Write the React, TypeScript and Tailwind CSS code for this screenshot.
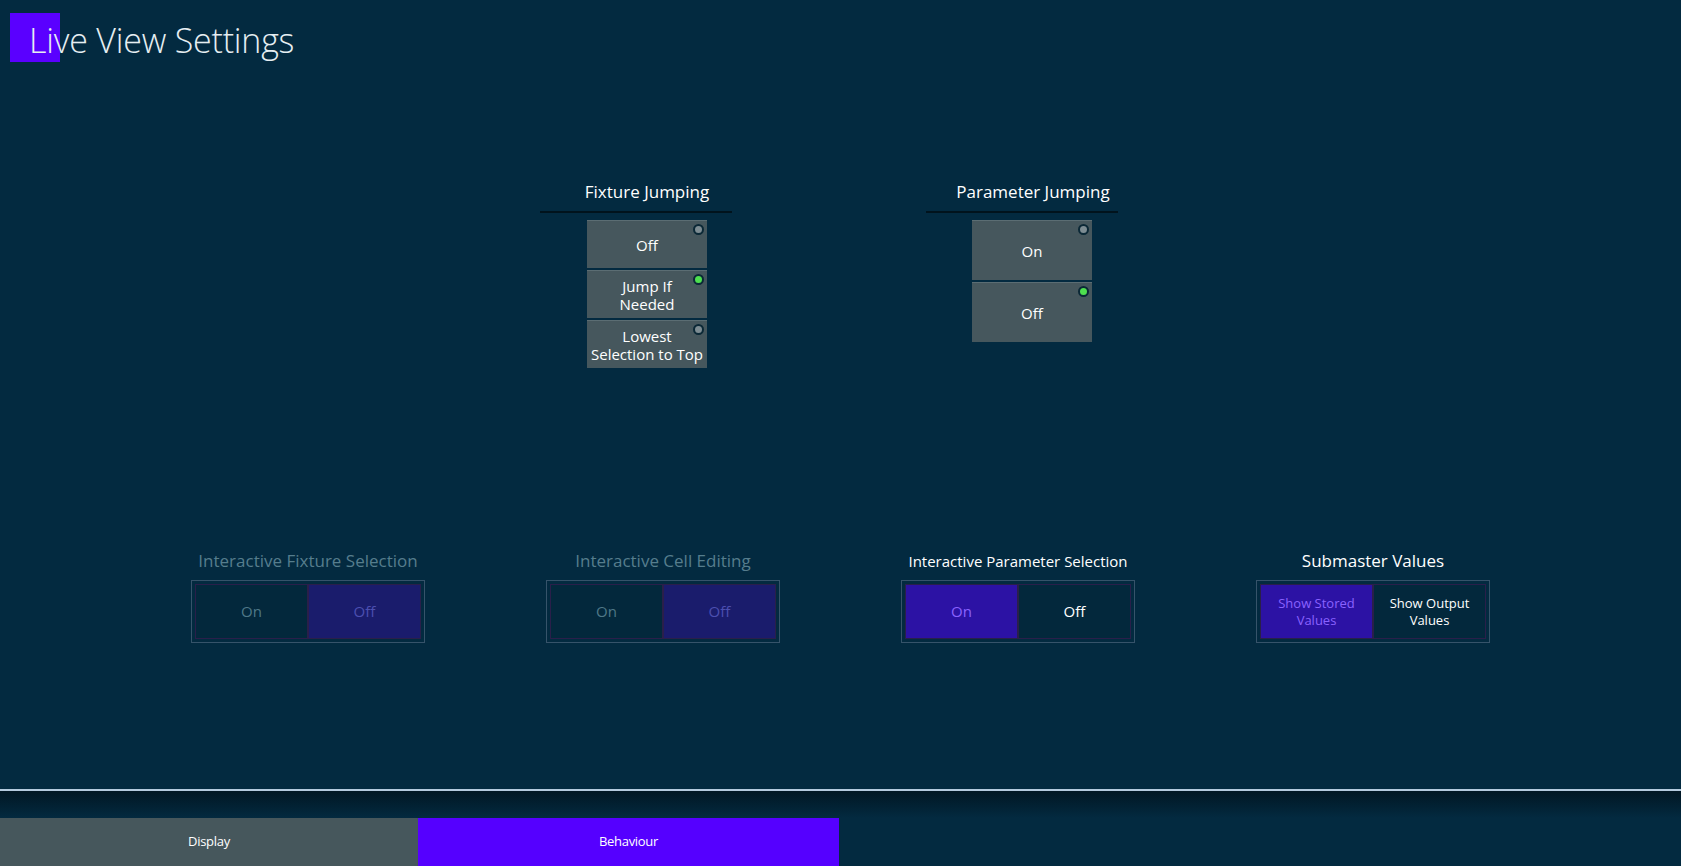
import React from "react";

const font = { fontFamily: '"Open Sans", "Noto Sans", sans-serif' };

function Indicator({ on }: { on: boolean }) {
  return (
    <span
      className={
        "absolute right-[3px] top-[3px] h-[11px] w-[11px] rounded-full border-[2px] border-[#0b2836] " +
        (on ? "bg-[#4ee04f]" : "bg-[#7d8c92]")
      }
    />
  );
}

function StackButton({ label, on, h }: { label: React.ReactNode; on: boolean; h: string }) {
  return (
    <div
      className={
        "relative flex w-[120px] items-center justify-center border-t border-[#5b6d73] bg-[#46575d] text-center text-[15px] leading-[18px] text-white " +
        h
      }
    >
      <span>{label}</span>
      <Indicator on={on} />
    </div>
  );
}

function Toggle({
  label,
  left,
  right,
  active,
  disabled,
  small,
  labelSize,
}: {
  label: string;
  left: React.ReactNode;
  right: React.ReactNode;
  active: "left" | "right";
  disabled?: boolean;
  small?: boolean;
  labelSize: string;
}) {
  const activeBg = disabled ? "bg-[#1a1c6c]" : "bg-[#2c12a4]";
  const activeText = disabled ? "text-[#4c4fb0]" : "text-[#8a62ff]";
  const idleText = disabled ? "text-[#4f7888]" : "text-white";
  const cell = (content: React.ReactNode, isActive: boolean) => (
    <div
      className={
        "flex flex-1 items-center justify-center border border-[#2a1f4a] text-center " +
        (small ? "text-[13px] leading-[17px] " : "text-[15px] ") +
        (isActive ? activeBg + " " + activeText : "bg-[#03283c] " + idleText)
      }
    >
      <span>{content}</span>
    </div>
  );
  return (
    <div className="flex w-[234px] flex-col items-center">
      <div
        className={
          "h-[22px] whitespace-nowrap leading-[22px] " + labelSize + " " + (disabled ? "text-[#567d8d]" : "text-white")
        }
      >
        {label}
      </div>
      <div className="mt-[8px] flex h-[63px] w-[234px] border border-[#36536a] p-[3px]">
        {cell(left, active === "left")}
        {cell(right, active === "right")}
      </div>
    </div>
  );
}

export default function App() {
  return (
    <div className="flex h-[866px] w-[1681px] flex-col overflow-hidden bg-[#032a40]" style={font}>
      {/* Header */}
      <div className="relative h-[180px] shrink-0">
        <div className="absolute left-[10px] top-[13px] h-[49px] w-[50px] bg-[#5a00ff]" />
        <div className="relative pl-[29px] pt-[18px] text-[34px] font-light leading-[44px] tracking-[-0.2px] text-[#e6eef2]">
          Live View Settings
        </div>
      </div>

      {/* Jumping groups */}
      <div className="flex shrink-0 gap-[194px] pl-[540px]">
        <div className="flex w-[192px] flex-col">
          <div className="ml-[22px] h-[24px] whitespace-nowrap text-center text-[17px] leading-[24px] text-white">Fixture Jumping</div>
          <div className="mt-[7px] h-[2px] w-[192px] bg-[#01131d]" />
          <div className="ml-[47px] mt-[7px] flex flex-col gap-[2px]">
            <StackButton label="Off" on={false} h="h-[48px]" />
            <StackButton label={<>Jump If<br />Needed</>} on={true} h="h-[48px]" />
            <StackButton label={<>Lowest<br />Selection to Top</>} on={false} h="h-[48px]" />
          </div>
        </div>
        <div className="flex w-[192px] flex-col">
          <div className="ml-[22px] h-[24px] whitespace-nowrap text-center text-[17px] leading-[24px] text-white">Parameter Jumping</div>
          <div className="mt-[7px] h-[2px] w-[192px] bg-[#01131d]" />
          <div className="ml-[46px] mt-[7px] flex flex-col gap-[2px]">
            <StackButton label="On" on={false} h="h-[60px]" />
            <StackButton label="Off" on={true} h="h-[60px]" />
          </div>
        </div>
      </div>

      {/* Toggles */}
      <div className="mt-[182px] flex shrink-0 gap-[121px] pl-[191px]">
        <Toggle label="Interactive Fixture Selection" left="On" right="Off" active="right" disabled labelSize="text-[17px]" />
        <Toggle label="Interactive Cell Editing" left="On" right="Off" active="right" disabled labelSize="text-[17px]" />
        <Toggle label="Interactive Parameter Selection" left="On" right="Off" active="left" labelSize="text-[15px]" />
        <Toggle
          label="Submaster Values"
          left={<>Show Stored<br />Values</>}
          right={<>Show Output<br />Values</>}
          active="left"
          small
          labelSize="text-[17px]"
        />
      </div>

      <div className="flex-1" />

      {/* Bottom bar */}
      <div className="h-[2px] shrink-0 bg-[#b4cade]" />
      <div className="h-[27px] shrink-0 bg-gradient-to-b from-[#011724] to-[#032a40]" />
      <div className="flex h-[48px] shrink-0">
        <div className="flex w-[418px] items-center justify-center bg-[#46575c] text-[13px] tracking-[-0.3px] text-white">
          Display
        </div>
        <div className="flex w-[421px] items-center justify-center bg-[#5500ff] text-[13px] tracking-[-0.3px] text-white">
          Behaviour
        </div>
      </div>
    </div>
  );
}
